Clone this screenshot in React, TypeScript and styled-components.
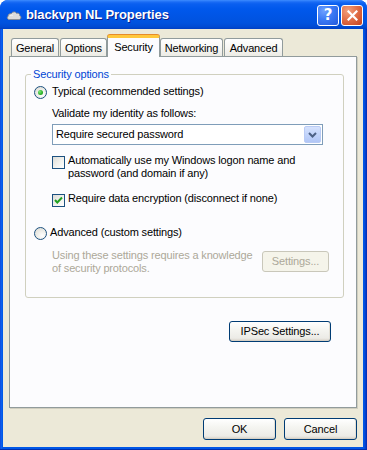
import React from "react";
import styled, { createGlobalStyle, css } from "styled-components";

const GlobalStyle = createGlobalStyle`
  html, body { margin: 0; padding: 0; background: #ffffff; }
  body { font-family: "Liberation Sans", Arial, sans-serif; font-size: 11px; letter-spacing: -0.15px; color: #000; }
  * { box-sizing: border-box; }
`;

const Window = styled.div`
  width: 367px;
  height: 450px;
  display: flex;
  flex-direction: column;
  border-radius: 8px 8px 0 0;
  overflow: hidden;
  background: #0054e3;
`;

const TitleBar = styled.div`
  height: 29px;
  flex: none;
  display: flex;
  align-items: center;
  padding: 1px 4px 0 6px;
  background: linear-gradient(
    to bottom,
    #3d8cff 0px,
    #1a6cf5 2px,
    #0a5ff0 4px,
    #0058ec 9px,
    #0055e5 16px,
    #0052de 23px,
    #004ad2 27px,
    #003fc2 29px
  );
`;

const AppIcon = styled.svg`
  width: 16px;
  height: 12px;
  flex: none;
`;

const Title = styled.div`
  margin-left: 4px;
  flex: 1;
  color: #ffffff;
  font-family: "Liberation Sans", Arial, sans-serif;
  font-weight: bold;
  font-size: 13px;
  letter-spacing: -0.1px;
  text-shadow: 1px 1px 0 #0a1e8a;
  line-height: 16px;
`;

const CaptionButton = styled.div<{ $kind: "help" | "close" }>`
  width: 22px;
  height: 21px;
  flex: none;
  margin-left: 2px;
  border: 1px solid #ffffff;
  border-radius: 3px;
  display: flex;
  align-items: center;
  justify-content: center;
  color: #ffffff;
  font-family: "DejaVu Sans", sans-serif;
  font-weight: bold;
  font-size: 15px;
  letter-spacing: 0;
  ${(p) =>
    p.$kind === "help"
      ? css`
          background: radial-gradient(circle at 30% 25%, #6fa1ff 0, #3b7af5 45%, #2359dc 100%);
        `
      : css`
          background: radial-gradient(circle at 30% 25%, #f1a07e 0, #e2714a 45%, #c6401c 100%);
        `}
`;

const Frame = styled.div`
  flex: 1;
  display: flex;
  padding: 0 4px 3px 3px;
  background: linear-gradient(
    to right,
    #0a39cf 0px,
    #1467f2 1px,
    #0058e8 2px,
    #0055e5 calc(100% - 3px),
    #0046d5 calc(100% - 2px),
    #0737c6 calc(100% - 1px),
    #002aa8 100%
  );
  box-shadow: inset 0 -1px 0 #0030b0;
`;

const Client = styled.div`
  flex: 1;
  display: flex;
  flex-direction: column;
  background: #ece9d8;
  padding: 6px 6px 7px 6px;
`;

const TabStrip = styled.div`
  height: 21px;
  flex: none;
  display: flex;
  align-items: flex-end;
  padding-left: 2px;
  position: relative;
  z-index: 1;
`;

const Tab = styled.div<{ $w: number; $active?: boolean; $gap?: number }>`
  width: ${(p) => p.$w}px;
  margin-right: ${(p) => p.$gap ?? 0}px;
  height: 18px;
  display: flex;
  align-items: center;
  justify-content: center;
  border: 1px solid #919b9c;
  border-bottom: none;
  border-radius: 3px 3px 0 0;
  background: linear-gradient(to bottom, #ffffff 0%, #f7f7f4 50%, #ecebe5 100%);
  padding-top: 1px;
  ${(p) =>
    p.$active &&
    css`
      height: 22px;
      margin-bottom: -1px;
      padding-top: 0;
      padding-bottom: 2px;
      background: #fcfcfe;
      border-top: 3px solid #ffc83c;
      box-shadow: 0 -1px 0 #e68b2c;
    `}
`;

const Panel = styled.div`
  flex: 1;
  display: flex;
  flex-direction: column;
  background: #fcfcfe;
  border: 1px solid #919b9c;
  box-shadow: 1px 1px 0 #d0cebf;
  padding: 11px 12px 0 15px;
`;

const GroupBox = styled.fieldset`
  margin: 0;
  padding: 0 14px 22px 8px;
  min-width: 0;
  border: 1px solid #d0d0bf;
  border-radius: 3px;
  display: flex;
  flex-direction: column;
`;

const Legend = styled.legend`
  color: #0046d5;
  line-height: 13px;
  padding: 0 2px;
  margin-left: -3px;
`;

const OptionRow = styled.div<{ $top: number; $gap: number }>`
  display: flex;
  align-items: flex-start;
  gap: ${(p) => p.$gap}px;
  margin-top: ${(p) => p.$top}px;
`;

const Text = styled.div<{ $top?: number; $disabled?: boolean }>`
  line-height: 13px;
  white-space: nowrap;
  margin-top: ${(p) => p.$top ?? 0}px;
  color: ${(p) => (p.$disabled ? "#aca899" : "#000000")};
`;

const Radio = styled.div<{ $checked?: boolean }>`
  width: 13px;
  height: 13px;
  flex: none;
  margin-top: 1px;
  border-radius: 50%;
  border: 1px solid #1c5180;
  background: radial-gradient(circle at 65% 70%, #ffffff 0, #f2f2ee 35%, #d8d8d0 100%);
  display: flex;
  align-items: center;
  justify-content: center;
  &::after {
    content: "";
    display: ${(p) => (p.$checked ? "block" : "none")};
    width: 5px;
    height: 5px;
    border-radius: 50%;
    background: radial-gradient(circle at 35% 35%, #7ee87a 0, #2fb52c 55%, #1a8c18 100%);
  }
`;

const CheckBox = styled.div`
  width: 13px;
  height: 13px;
  flex: none;
  margin-top: 2px;
  border: 1px solid #1c5180;
  background: linear-gradient(135deg, #dcdcd7 0%, #f0f0ec 50%, #ffffff 100%);
  display: flex;
  align-items: center;
  justify-content: center;
`;

const Indent = styled.div`
  display: flex;
  flex-direction: column;
  padding-left: 18px;
`;

const Select = styled.div`
  margin-top: 4px;
  width: 271px;
  height: 21px;
  border: 1px solid #7f9db9;
  background: #ffffff;
  padding: 1px;
  display: flex;
  align-items: center;
`;

const SelectValue = styled.div`
  flex: 1;
  padding-left: 2px;
  line-height: 13px;
`;

const DropButton = styled.div`
  width: 17px;
  height: 17px;
  flex: none;
  border: 1px solid #b9cbf5;
  border-radius: 2px;
  background: linear-gradient(to bottom, #d6e2fd 0%, #c2d4fb 50%, #b1c6f6 100%);
  display: flex;
  align-items: center;
  justify-content: center;
`;

const DescRow = styled.div`
  margin-top: 9px;
  padding-left: 18px;
  display: flex;
  align-items: flex-start;
  justify-content: space-between;
`;

const Button = styled.div<{ $w: number; $h?: number; $disabled?: boolean; $top?: number }>`
  width: ${(p) => p.$w}px;
  height: ${(p) => p.$h ?? 21}px;
  flex: none;
  margin-top: ${(p) => p.$top ?? 0}px;
  display: flex;
  align-items: center;
  justify-content: center;
  border-radius: 3px;
  line-height: 13px;
  ${(p) =>
    p.$disabled
      ? css`
          border: 1px solid #c9c7ba;
          background: #f5f4ea;
          color: #aca899;
        `
      : css`
          border: 1px solid #003c74;
          background: linear-gradient(to bottom, #ffffff 0%, #f5f5f1 40%, #ecebe6 85%, #d6d0c5 100%);
          color: #000000;
          box-shadow: inset 0 -1px 0 #d6d0c5, inset -1px 0 0 #e3e0d6;
        `}
`;

const IPSecRow = styled.div`
  margin-top: 23px;
  display: flex;
  justify-content: flex-end;
  padding-right: 13px;
`;

const DialogButtons = styled.div`
  margin-top: 10px;
  display: flex;
  justify-content: flex-end;
  gap: 8px;
  flex: none;
`;

const CloudIcon = () => (
  <AppIcon viewBox="0 0 16 12">
    <path
      d="M3.5 10.5 C1.3 10.5 0.6 8.2 2.2 7.2 C1.8 5.3 3.8 4.3 5.2 5 C5.8 2.6 9.4 2.1 10.6 4.4 C12.2 3.6 14 4.8 13.6 6.6 C15.4 7 15.4 10.5 13 10.5 Z"
      fill="#dcdcdc"
      stroke="#8c8c8c"
      strokeWidth="0.9"
    />
    <path d="M4 6.5 C5 5.8 6.2 6 6.8 6.6" stroke="#ffffff" strokeWidth="0.8" fill="none" />
  </AppIcon>
);

const CloseGlyph = () => (
  <svg width="11" height="11" viewBox="0 0 11 11">
    <path d="M1.5 1.5 L9.5 9.5 M9.5 1.5 L1.5 9.5" stroke="#ffffff" strokeWidth="2.2" strokeLinecap="square" />
  </svg>
);

const CheckGlyph = () => (
  <svg width="9" height="9" viewBox="0 0 9 9">
    <path d="M1 4 L3.3 6.5 L8 1.5" stroke="#21a121" strokeWidth="2" fill="none" />
  </svg>
);

const ArrowGlyph = () => (
  <svg width="9" height="6" viewBox="0 0 9 6">
    <path d="M1 1 L4.5 4.5 L8 1" stroke="#4d6185" strokeWidth="2" fill="none" />
  </svg>
);

export default function App() {
  return (
    <>
      <GlobalStyle />
      <Window>
        <TitleBar>
          <CloudIcon />
          <Title>blackvpn NL Properties</Title>
          <CaptionButton $kind="help">?</CaptionButton>
          <CaptionButton $kind="close">
            <CloseGlyph />
          </CaptionButton>
        </TitleBar>
        <Frame>
          <Client>
            <TabStrip>
              <Tab $w={48} $gap={1}>General</Tab>
              <Tab $w={47}>Options</Tab>
              <Tab $w={53} $active>
                Security
              </Tab>
              <Tab $w={63} $gap={1}>Networking</Tab>
              <Tab $w={59}>Advanced</Tab>
            </TabStrip>
            <Panel>
              <GroupBox>
                <Legend>Security options</Legend>
                <OptionRow $top={4} $gap={5}>
                  <Radio $checked />
                  <Text>Typical (recommended settings)</Text>
                </OptionRow>
                <Indent>
                  <Text $top={8}>Validate my identity as follows:</Text>
                  <Select>
                    <SelectValue>Require secured password</SelectValue>
                    <DropButton>
                      <ArrowGlyph />
                    </DropButton>
                  </Select>
                  <OptionRow $top={9} $gap={3}>
                    <CheckBox />
                    <Text>
                      Automatically use my Windows logon name and
                      <br />
                      password (and domain if any)
                    </Text>
                  </OptionRow>
                  <OptionRow $top={12} $gap={3}>
                    <CheckBox>
                      <CheckGlyph />
                    </CheckBox>
                    <Text>Require data encryption (disconnect if none)</Text>
                  </OptionRow>
                </Indent>
                <OptionRow $top={19} $gap={3}>
                  <Radio />
                  <Text>Advanced (custom settings)</Text>
                </OptionRow>
                <DescRow>
                  <Text $disabled>
                    Using these settings requires a knowledge
                    <br />
                    of security protocols.
                  </Text>
                  <Button $w={67} $top={2} $disabled>
                    Settings...
                  </Button>
                </DescRow>
              </GroupBox>
              <IPSecRow>
                <Button $w={102}>IPSec Settings...</Button>
              </IPSecRow>
            </Panel>
            <DialogButtons>
              <Button $w={73} $h={22}>OK</Button>
              <Button $w={73} $h={22}>Cancel</Button>
            </DialogButtons>
          </Client>
        </Frame>
      </Window>
    </>
  );
}
